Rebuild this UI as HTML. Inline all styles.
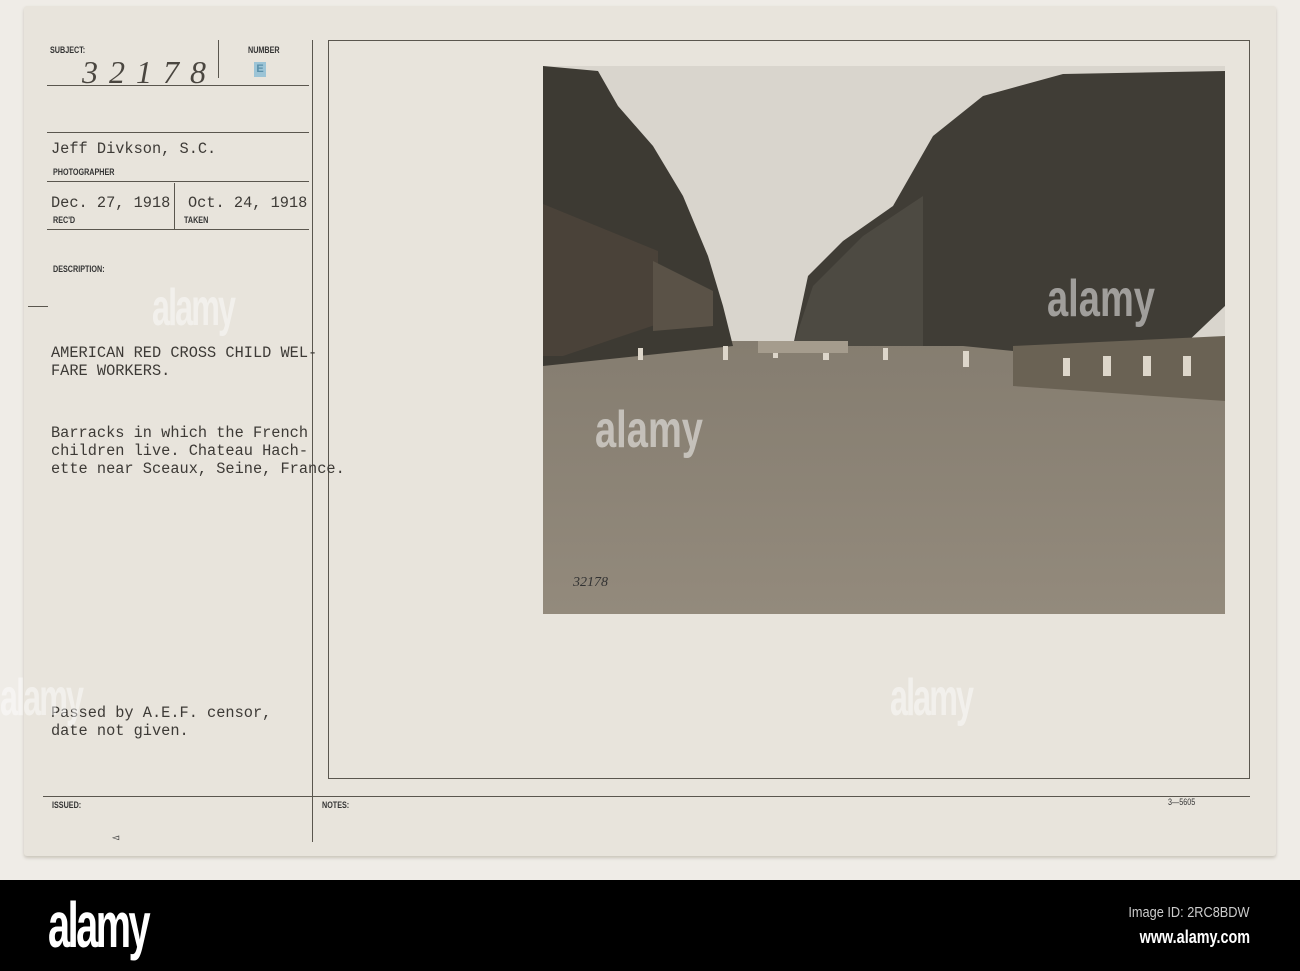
<!DOCTYPE html>
<html><head><meta charset="utf-8"><style>
body{margin:0;width:1300px;height:971px;background:#efece7;position:relative;overflow:hidden;font-family:"Liberation Mono",monospace}
.card{position:absolute;left:24px;top:6px;width:1252px;height:850px;background:#e8e4dc;border-radius:3px;box-shadow:0 2px 3px #c9c4ba}
.l{position:absolute;background:#5a564e}
.s{position:absolute;font-family:"Liberation Sans",sans-serif;font-weight:bold;font-size:9px;color:#333;transform:scaleX(.8);transform-origin:left}
.t{position:absolute;font-size:15.3px;color:#3d3a36;white-space:pre;line-height:18px}
.w{position:absolute;font-family:"Liberation Sans",sans-serif;font-weight:bold;color:rgba(255,255,255,.45);font-size:52px;letter-spacing:-3px;transform:scaleX(.62);transform-origin:left;line-height:52px}
.band{position:absolute;left:0;top:880px;width:1300px;height:91px;background:#000;color:#fff;font-family:"Liberation Sans",sans-serif}
</style></head><body>
<div class="card"></div>
<div class="l" style="left:47px;top:85px;width:262px;height:1px"></div>
<div class="l" style="left:218px;top:40px;width:1px;height:38px"></div>
<div class="l" style="left:312px;top:40px;width:1px;height:802px"></div>
<div class="l" style="left:47px;top:132px;width:262px;height:1px"></div>
<div class="l" style="left:47px;top:181px;width:262px;height:1px"></div>
<div class="l" style="left:174px;top:183px;width:1px;height:46px"></div>
<div class="l" style="left:47px;top:229px;width:262px;height:1px"></div>
<div class="l" style="left:28px;top:306px;width:20px;height:1px"></div>
<div class="l" style="left:43px;top:796px;width:1207px;height:1px"></div>
<div style="position:absolute;left:328px;top:40px;width:920px;height:737px;border:1px solid #5a564e"></div>
<div class="s" style="left:50px;top:45px">SUBJECT:</div>
<div class="s" style="left:248px;top:45px">NUMBER</div>
<div style="position:absolute;left:82px;top:54px;font-family:'Liberation Serif',serif;font-style:italic;font-size:32px;color:#4a4640;letter-spacing:11px">32178</div>
<div style="position:absolute;left:254px;top:62px;width:12px;height:15px;background:#9cc4d6;color:#5a90aa;font:bold 11px 'Liberation Sans';text-align:center;line-height:15px">E</div>
<div class="t" style="left:51px;top:140px">Jeff Divkson, S.C.</div>
<div class="s" style="left:53px;top:167px">PHOTOGRAPHER</div>
<div class="t" style="left:51px;top:194px">Dec. 27, 1918</div>
<div class="t" style="left:188px;top:194px">Oct. 24, 1918</div>
<div class="s" style="left:53px;top:215px">REC'D</div>
<div class="s" style="left:184px;top:215px">TAKEN</div>
<div class="s" style="left:53px;top:264px">DESCRIPTION:</div>
<div class="t" style="left:51px;top:344px">AMERICAN RED CROSS CHILD WEL-
FARE WORKERS.</div>
<div class="t" style="left:51px;top:424px">Barracks in which the French
children live. Chateau Hach-
ette near Sceaux, Seine, France.</div>
<div class="t" style="left:51px;top:704px">Passed by A.E.F. censor,
date not given.</div>
<div class="s" style="left:52px;top:800px">ISSUED:</div>
<div class="s" style="left:322px;top:800px">NOTES:</div>
<div class="s" style="left:1168px;top:797px;font-weight:normal">3—5605</div>
<div style="position:absolute;left:112px;top:830px;font-size:12px;color:#444">◅</div>
<div class="w" style="left:152px;top:282px">alamy</div>
<div class="w" style="left:0;top:672px">alamy</div>
<div class="w" style="left:890px;top:672px">alamy</div>
<svg style="position:absolute;left:543px;top:66px" width="682" height="548" viewBox="0 0 682 548">
<defs><linearGradient id="g" x1="0" y1="0" x2="0" y2="1"><stop offset="0" stop-color="#857d70"/><stop offset="1" stop-color="#938a7c"/></linearGradient></defs>
<rect width="682" height="548" fill="#d9d5cd"/>
<rect y="275" width="682" height="273" fill="url(#g)"/>
<path d="M0 0 L55 5 L75 40 L110 80 L140 130 L165 190 L180 240 L190 280 L0 300Z" fill="#3d3a33"/>
<path d="M0 138 L115 185 L115 258 L20 290 L0 290Z" fill="#4a4239"/>
<path d="M110 195 L170 225 L170 260 L110 265Z" fill="#5a5247"/>
<path d="M250 280 L265 210 L300 175 L350 140 L390 70 L440 30 L520 8 L682 5 L682 240 L640 280 L600 300 L520 290 L420 280Z" fill="#403d36"/>
<path d="M250 280 L270 220 L320 170 L380 130 L380 280Z" fill="#4d4a42"/>
<path d="M470 280 L682 270 L682 335 L470 320Z" fill="#6a6254"/>
<g fill="#ddd6ca"><rect x="95" y="282" width="5" height="12"/><rect x="180" y="280" width="5" height="14"/><rect x="230" y="280" width="5" height="12"/><rect x="280" y="280" width="6" height="14"/><rect x="340" y="282" width="5" height="12"/><rect x="420" y="285" width="6" height="16"/><rect x="520" y="292" width="7" height="18"/><rect x="560" y="290" width="8" height="20"/><rect x="600" y="290" width="8" height="20"/><rect x="640" y="290" width="8" height="20"/></g>
<rect x="215" y="275" width="90" height="12" fill="#a59c8d"/>
<text x="30" y="520" font-family="Liberation Serif" font-style="italic" font-size="14" fill="#333">32178</text>
<g font-family="Liberation Sans" font-weight="bold" fill="rgba(255,255,255,.5)" font-size="52"><text x="52" y="381" textLength="108" lengthAdjust="spacingAndGlyphs">alamy</text><text x="504" y="250" textLength="108" lengthAdjust="spacingAndGlyphs">alamy</text></g>
</svg>
<div class="band">
<div style="position:absolute;left:48px;top:12px;font-size:64px;font-weight:bold;letter-spacing:-4px;transform:scaleX(.62);transform-origin:left;line-height:66px">alamy</div>
<div style="position:absolute;right:50px;top:24px;font-size:15px;color:#ccc;transform:scaleX(.85);transform-origin:right">Image ID: 2RC8BDW</div>
<div style="position:absolute;right:50px;top:47px;font-size:18px;font-weight:bold;transform:scaleX(.8);transform-origin:right">www.alamy.com</div>
</div>
</body></html>
